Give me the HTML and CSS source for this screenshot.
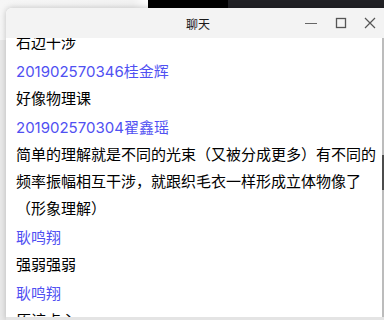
FILE: index.html
```html
<!DOCTYPE html>
<html lang="zh-CN">
<head>
<meta charset="utf-8">
<title>聊天</title>
<link rel="stylesheet" href="styles.css">
</head>
<body>
<div class="desktop">
  <div class="bg-win bg-light"></div>
  <div class="bg-win bg-black"></div>
  <div class="bg-win bg-dark"></div>
  <div class="window">
    <div class="titlebar">
      <div class="title">聊天</div>
      <div class="controls">
        <span class="ctl ctl-min"><svg width="12" height="12" viewBox="0 0 12 12"><path d="M0 6.5H12" stroke="#666" stroke-width="1.2"/></svg></span>
        <span class="ctl ctl-max"><svg width="12" height="12" viewBox="0 0 12 12"><rect x="1.5" y="1.5" width="9" height="9" fill="none" stroke="#555" stroke-width="1.3"/></svg></span>
        <span class="ctl ctl-close"><svg width="12" height="12" viewBox="0 0 12 12"><path d="M1 1L11 11M11 1L1 11" stroke="#555" stroke-width="1.2"/></svg></span>
      </div>
    </div>
    <div class="body">
      <div class="list">
        <div class="entry first">
          <div class="msg">右边干涉</div>
        </div>
        <div class="entry">
          <div class="name">201902570346桂金辉</div>
          <div class="msg">好像物理课</div>
        </div>
        <div class="entry">
          <div class="name">201902570304翟鑫瑶</div>
          <div class="msg">简单的理解就是不同的光束（又被分成更多）有不同的频率振幅相互干涉，就跟织毛衣一样形成立体物像了（形象理解）</div>
        </div>
        <div class="entry">
          <div class="name">耿鸣翔</div>
          <div class="msg">强弱强弱</div>
        </div>
        <div class="entry">
          <div class="name">耿鸣翔</div>
          <div class="msg">原谅点心</div>
        </div>
      </div>
      <div class="scrollbar"><div class="thumb"></div></div>
    </div>
    <div class="footer"></div>
  </div>
</div>
</body>
</html>
```
FILE: styles.css
```css
html, body {
  margin: 0;
  padding: 0;
  width: 384px;
  height: 320px;
  overflow: hidden;
}
body {
  font-family: Inter, "Noto Sans CJK SC", sans-serif;
  background: #ececec;
}
.desktop {
  position: relative;
  width: 384px;
  height: 320px;
  overflow: hidden;
  background: #e9e9e9;
}
.bg-win {
  position: absolute;
  top: 0;
  height: 40px;
}
.bg-light {
  left: 0;
  width: 148px;
  background: linear-gradient(to right, #f6f6f6, #f2f2f2 90%, #fdfdfd);
}
.bg-black {
  left: 148px;
  width: 80px;
  background: #000;
}
.bg-dark {
  left: 228px;
  width: 160px;
  background: #212125;
}
.window {
  position: absolute;
  left: 6px;
  top: 8px;
  width: 392px;
  height: 312px;
  background: #fff;
  border-radius: 6px 6px 0 0;
  box-shadow: 0 0 6px rgba(0, 0, 0, 0.22);
  display: flex;
  flex-direction: column;
  overflow: hidden;
}
.titlebar {
  height: 30px;
  flex: none;
  background: #f3f3f3;
  display: flex;
  align-items: center;
  position: relative;
}
.title {
  width: 380px;
  text-align: center;
  font-family: "Noto Sans CJK SC", sans-serif;
  font-size: 12px;
  color: #1a1a1a;
  padding-left: 2px;
}
.controls {
  position: absolute;
  left: 299px;
  top: 0;
  height: 30px;
  display: flex;
  align-items: center;
}
.ctl {
  width: 12px;
  height: 12px;
  display: block;
}
.ctl svg { display: block; }
.ctl-min { margin-right: 18px; }
.ctl-max { margin-right: 17px; }
.body {
  flex: 1;
  display: flex;
  overflow: hidden;
  min-height: 0;
}
.list {
  width: 364px;
  padding-left: 10px;
  padding-right: 2px;
  overflow: hidden;
  flex: none;
}
.entry {
  margin-bottom: 2px;
}
.entry.first {
  margin-top: -9px;
}
.name {
  font-size: 15px;
  line-height: 27px;
  color: #5050f2;
}
.msg {
  font-size: 15px;
  line-height: 27px;
  color: #000;
}
.scrollbar {
  width: 12px;
  flex: none;
  background: #bcbcbc;
  position: relative;
}
.thumb {
  position: absolute;
  left: 0;
  right: 0;
  top: 117px;
  height: 35px;
  background: #4c4c4c;
}
.footer {
  height: 3px;
  flex: none;
  background: #e4e4e4;
}
```
